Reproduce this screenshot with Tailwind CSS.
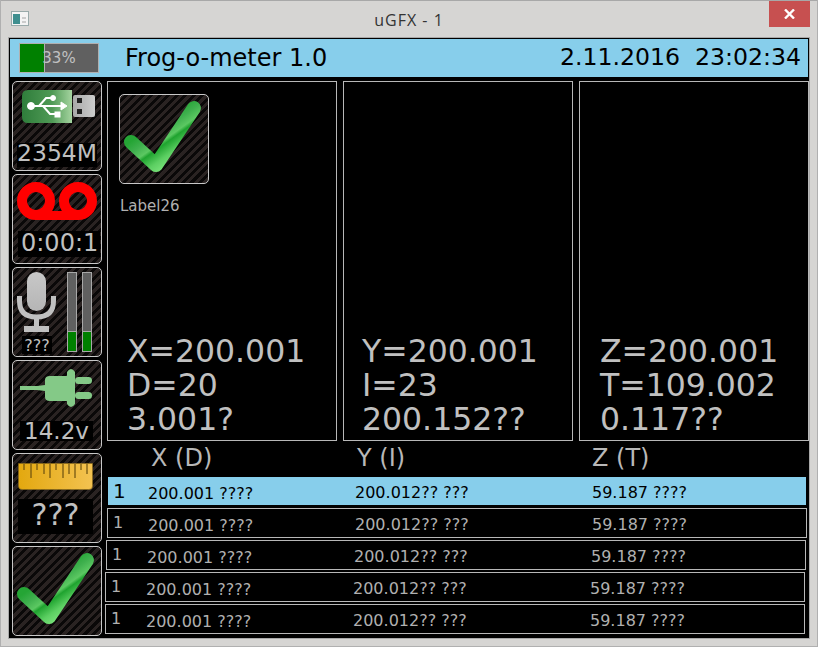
<!DOCTYPE html>
<html lang="en">
<head>
  <meta charset="UTF-8" />
  <title>uGFX - 1</title>
  <script src="https://cdn.jsdelivr.net/npm/@tailwindcss/browser@4"></script>
</head>
<body class="w-[818px] h-[647px] overflow-hidden bg-[#d6d5d3] border-x border-b border-[#b0b0b0] font-['DejaVu_Sans',sans-serif] text-[#c0c0c0]">
<svg width="0" height="0" class="absolute">
  <defs>
    <linearGradient id="chk" gradientUnits="userSpaceOnUse" x1="20" y1="40" x2="45" y2="75">
      <stop offset="0" stop-color="#25a535"/><stop offset="0.22" stop-color="#3fb04e"/><stop offset="0.42" stop-color="#5cc862"/><stop offset="0.5" stop-color="#1fa32f"/><stop offset="0.75" stop-color="#5ccf62"/><stop offset="1" stop-color="#7ce47c"/>
    </linearGradient>
    <linearGradient id="usbg" x1="0" y1="0" x2="1" y2="0">
      <stop offset="0" stop-color="#2f7d3b"/><stop offset="0.6" stop-color="#4f9a55"/><stop offset="1" stop-color="#a5d4a0"/>
    </linearGradient>
    <linearGradient id="plugg" x1="0" y1="0" x2="1" y2="0">
      <stop offset="0" stop-color="#a8a8a8"/><stop offset="1" stop-color="#cdcdcd"/>
    </linearGradient>
    <linearGradient id="rul" x1="0" y1="0" x2="1" y2="0">
      <stop offset="0" stop-color="#e3a80f"/><stop offset="1" stop-color="#f3c251"/>
    </linearGradient>
    <linearGradient id="mic" x1="0" y1="0" x2="0" y2="1">
      <stop offset="0" stop-color="#c8c8c8"/><stop offset="1" stop-color="#b5b5b5"/>
    </linearGradient>
  </defs>
</svg>

<!-- title bar -->
<div class="h-[37px] -mx-px relative flex items-center justify-center border-t border-[#a8a8a8]">
  <svg class="absolute left-[11px] top-[10px]" width="19" height="16" viewBox="0 0 19 16">
    <rect x="0.5" y="0.5" width="17" height="14" fill="#f4f4f4" stroke="#9aa"/>
    <rect x="2" y="3" width="7" height="10" fill="#3f8f8f"/>
    <rect x="11" y="6" width="4" height="2" fill="#ccc"/><rect x="11" y="10" width="4" height="2" fill="#ccc"/>
  </svg>
  <span class="text-[16px] tracking-[1px] text-[#333] font-['Open_Sans',sans-serif] mt-[1px]">uGFX - 1</span>
  <div class="absolute right-[8px] top-0 w-[41px] h-[26px] bg-[#c75050] flex items-center justify-center">
    <svg width="11" height="10" viewBox="0 0 11 10"><path d="M1 0.5 L10 9.5 M10 0.5 L1 9.5" stroke="#fff" stroke-width="2.4"/></svg>
  </div>
</div>

<!-- app -->
<div class="ml-[8px] mt-px w-[800px] h-[600px] bg-black pt-px shadow-[0_0_0_1px_#a8a8a8]">
  <!-- status bar -->
  <div class="h-[38px] ml-px w-[798px] bg-[#87ceeb] flex items-center text-black text-[24px]">
    <div class="ml-[9px] w-[80px] h-[30px] border border-[#b0b0b0] bg-[#606060] relative flex items-center justify-center text-[15px] text-[#c0c0c0]">
      <div class="absolute left-0 top-0 bottom-0 w-[25px] bg-[#008000] border-r border-[#b0b0b0]"></div>
      <span class="relative">33%</span>
    </div>
    <span class="ml-[26px]">Frog-o-meter 1.0</span>
    <span class="ml-auto mr-[7px] text-[23.6px] whitespace-pre">2.11.2016  23:02:34</span>
  </div>

  <div class="flex mt-[4px]">
    <!-- left buttons -->
    <div class="ml-[3px] w-[90px] flex flex-col gap-[3px]">
      <div class="w-[90px] h-[90px] rounded-[5px] border border-[#c8c8c8] overflow-hidden bg-[repeating-linear-gradient(135deg,#2a2322_0,#2a2322_3px,#0a0808_3px,#0a0808_6px)] flex flex-col items-center">
        <svg class="shrink-0" width="88" height="61" viewBox="0 0 88 61">
          <path d="M15 8 H59 V41 H15 Q9 41 9 35 V14 Q9 8 15 8Z" fill="url(#usbg)"/>
          <rect x="60" y="13" width="22" height="22" rx="2" fill="url(#plugg)"/>
          <rect x="64" y="16" width="5" height="5" fill="#222"/><rect x="64" y="27" width="5" height="5" fill="#222"/>
          <g fill="#fff" stroke="#fff">
            <circle cx="18" cy="24" r="3.5"/>
            <path d="M18 24 H50" stroke-width="2"/>
            <path d="M26 24 L33 16 H39 M30 24 L37 32 H43" fill="none" stroke-width="2"/>
            <circle cx="40" cy="16" r="2.5"/>
            <rect x="42" y="30" width="5" height="5"/>
            <path d="M48 20 L54 24 L48 28Z"/>
          </g>
        </svg>
        <div class="bg-black text-[23.5px] leading-[20px] h-[24px] w-[80px] text-center whitespace-nowrap">2354M</div>
      </div>
      <div class="w-[90px] h-[90px] rounded-[5px] border border-[#c8c8c8] overflow-hidden bg-[repeating-linear-gradient(135deg,#2a2322_0,#2a2322_3px,#0a0808_3px,#0a0808_6px)] flex flex-col items-start">
        <svg class="shrink-0 ml-[4px] mt-[7px]" width="80" height="38" viewBox="0 0 80 38">
          <path d="M19 33.5 H61" stroke="#f00" stroke-width="9" fill="none"/>
          <circle cx="19" cy="19" r="14" fill="none" stroke="#f00" stroke-width="10"/>
          <circle cx="61" cy="19" r="14" fill="none" stroke="#f00" stroke-width="10"/>
        </svg>
        <div class="mt-[11px] ml-[5px] w-[82px] bg-black text-[24px] leading-[24px] h-[26px] pl-[3px] overflow-hidden whitespace-nowrap shrink-0">0:00:11</div>
      </div>
      <div class="w-[90px] h-[90px] rounded-[5px] border border-[#c8c8c8] overflow-hidden bg-[repeating-linear-gradient(135deg,#2a2322_0,#2a2322_3px,#0a0808_3px,#0a0808_6px)] flex">
        <div class="w-[54px] shrink-0 flex flex-col items-start">
          <svg class="shrink-0 mt-[3px] ml-[4px]" width="40" height="61" viewBox="0 0 40 61">
            <rect x="10" y="1" width="19" height="39" rx="9.5" fill="url(#mic)"/>
            <path d="M2.5 25 V30 Q2.5 46 19.5 46 Q36.5 46 36.5 30 V25" fill="none" stroke="#c0c0c0" stroke-width="5"/>
            <rect x="17" y="46" width="5" height="10" fill="#c0c0c0"/>
            <rect x="7" y="55" width="25" height="6" fill="#c0c0c0"/>
          </svg>
          <div class="mt-[4px] ml-[9px] bg-black text-[16px] leading-[20px] h-[18px] w-[30px] text-center">???</div>
        </div>
        <div class="mt-[4px] w-[10px] h-[80px] bg-[#606060] border border-[#a8a8a8] flex flex-col justify-end"><div class="h-[20px] bg-[#008000] border-t border-[#a8a8a8]"></div></div>
        <div class="mt-[4px] ml-[5px] w-[10px] h-[80px] bg-[#606060] border border-[#a8a8a8] flex flex-col justify-end"><div class="h-[20px] bg-[#008000] border-t border-[#a8a8a8]"></div></div>
      </div>
      <div class="w-[90px] h-[90px] rounded-[5px] border border-[#c8c8c8] overflow-hidden bg-[repeating-linear-gradient(135deg,#2a2322_0,#2a2322_3px,#0a0808_3px,#0a0808_6px)] flex flex-col items-start">
        <svg class="shrink-0" width="88" height="60" viewBox="0 0 88 60">
          <path d="M7 25 H24 L32 24 V19 Q32 15 37 15 H54 V11 Q58 5 62 11 V43 Q58 49 54 43 V40 H37 Q32 40 32 36 V30 L24 29 H7Z" fill="#84c987"/>
          <rect x="62" y="16" width="17" height="7" rx="3.5" fill="#84c987"/>
          <rect x="62" y="31" width="17" height="7" rx="3.5" fill="#84c987"/>
        </svg>
        <div class="ml-[7px] bg-black text-[23px] leading-[20px] h-[20px] w-[73px] text-center whitespace-nowrap shrink-0">14.2v</div>
      </div>
      <div class="w-[90px] h-[90px] rounded-[5px] border border-[#c8c8c8] overflow-hidden bg-[repeating-linear-gradient(135deg,#2a2322_0,#2a2322_3px,#0a0808_3px,#0a0808_6px)] flex flex-col items-start">
        <svg class="shrink-0 ml-[5px] mt-[9px]" width="75" height="27" viewBox="0 0 75 27">
          <path d="M0.5 0.5 H74.5 V23 Q74.5 26.5 71 26.5 H4 Q0.5 26.5 0.5 23Z" fill="url(#rul)" stroke="#8a6a1a" stroke-width="0.6"/>
          <path d="M6 1V7 M13 1V15 M19 1V7 M26 1V11 M32 1V15 M38 1V7 M45 1V15 M51 1V11 M57 1V15 M63 1V7 M69 1V11" stroke="#6b5010" stroke-width="1.2"/>
        </svg>
        <div class="mt-[9px] ml-[5px] bg-black text-[30px] leading-[31px] h-[35px] w-[75px] text-center shrink-0">???</div>
      </div>
      <div class="w-[90px] h-[90px] rounded-[5px] border border-[#c8c8c8] overflow-hidden bg-[repeating-linear-gradient(135deg,#2a2322_0,#2a2322_3px,#0a0808_3px,#0a0808_6px)]">
        <svg width="88" height="88" viewBox="0 0 88 88">
          <path d="M11 47 L36 70 L74 13" fill="none" stroke="url(#chk)" stroke-width="14" stroke-linecap="round" stroke-linejoin="round"/>
        </svg>
      </div>
    </div>

    <!-- right side -->
    <div class="ml-[5px] w-[702px]">
      <div class="flex gap-[5px]">
        <div class="w-[230px] h-[360px] mr-px border border-[#b8b8b8] flex flex-col">
          <div class="mt-[12px] ml-[11px] w-[90px] h-[90px] rounded-[5px] border border-[#c8c8c8] overflow-hidden bg-[repeating-linear-gradient(135deg,#2a2322_0,#2a2322_3px,#0a0808_3px,#0a0808_6px)]">
            <svg width="88" height="88" viewBox="0 0 88 88">
              <path d="M11 47 L36 70 L74 13" fill="none" stroke="url(#chk)" stroke-width="14" stroke-linecap="round" stroke-linejoin="round"/>
            </svg>
          </div>
          <div class="ml-[12px] mt-[13px] text-[15px] leading-[18px] text-[#b0b0b0]">Label26</div>
          <div class="mt-auto ml-[19px] mb-[4px] text-[31.5px] leading-[34px]"><div>X=200.001</div><div>D=20</div><div>3.001?</div></div>
        </div>
        <div class="w-[230px] h-[360px] mr-px border border-[#b8b8b8] flex flex-col justify-end">
          <div class="ml-[18px] mb-[4px] text-[31.5px] leading-[34px]"><div>Y=200.001</div><div>I=23</div><div>200.152??</div></div>
        </div>
        <div class="w-[230px] h-[360px] border border-[#b8b8b8] flex flex-col justify-end">
          <div class="ml-[20px] mb-[4px] text-[31.5px] leading-[34px]"><div>Z=200.001</div><div>T=109.002</div><div>0.117??</div></div>
        </div>
      </div>

      <!-- table header -->
      <div class="flex h-[36px] pb-[2px] items-center text-[24px] text-[#b8b8b8]">
        <span class="ml-[44px] w-[206px]">X (D)</span>
        <span class="w-[235px]">Y (I)</span>
        <span>Z (T)</span>
      </div>
      <!-- rows -->
      <div class="flex flex-col">
        <div class="ml-[1px] w-[698px] h-[28px] bg-[#87ceeb] text-black flex items-center text-[16px]">
          <span class="ml-[5px] w-[35px] text-[20px]">1</span><span class="w-[207px] mt-[5px]">200.001 ????</span><span class="w-[237px] mt-[3px]">200.012?? ???</span><span class="mt-[3px]">59.187 ????</span>
        </div>
        <div class="mt-[3px] w-[700px] h-[30px] border border-[#b8b8b8] flex items-center text-[16px] text-[#b0b0b0]">
          <span class="ml-[5px] w-[35px] mt-[-1px]">1</span><span class="w-[207px] mt-[5px]">200.001 ????</span><span class="w-[237px] mt-[3px]">200.012?? ???</span><span class="mt-[3px]">59.187 ????</span>
        </div>
        <div class="ml-[-1px] mt-[2px] w-[700px] h-[30px] border border-[#b8b8b8] flex items-center text-[16px] text-[#b0b0b0]">
          <span class="ml-[5px] w-[35px] mt-[-1px]">1</span><span class="w-[207px] mt-[5px]">200.001 ????</span><span class="w-[237px] mt-[3px]">200.012?? ???</span><span class="mt-[3px]">59.187 ????</span>
        </div>
        <div class="ml-[-2px] mt-[2px] w-[700px] h-[30px] border border-[#b8b8b8] flex items-center text-[16px] text-[#b0b0b0]">
          <span class="ml-[5px] w-[35px] mt-[-1px]">1</span><span class="w-[207px] mt-[5px]">200.001 ????</span><span class="w-[237px] mt-[3px]">200.012?? ???</span><span class="mt-[3px]">59.187 ????</span>
        </div>
        <div class="ml-[-2px] mt-[2px] w-[700px] h-[30px] border border-[#b8b8b8] flex items-center text-[16px] text-[#b0b0b0]">
          <span class="ml-[5px] w-[35px] mt-[-1px]">1</span><span class="w-[207px] mt-[5px]">200.001 ????</span><span class="w-[237px] mt-[3px]">200.012?? ???</span><span class="mt-[3px]">59.187 ????</span>
        </div>
      </div>
    </div>
  </div>
</div>
</body>
</html>
